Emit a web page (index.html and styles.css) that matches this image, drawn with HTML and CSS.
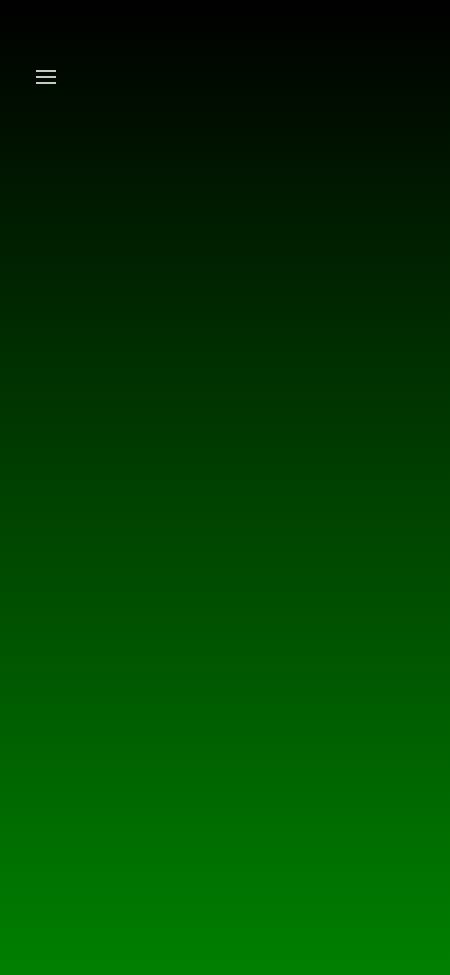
FILE: index.html
```html
<!DOCTYPE html>
<html lang="en">
  <head>
    <meta charset="UTF-8" />
    <meta name="viewport" content="width=device-width, initial-scale=1.0" />
    <title>Home</title>
    <link rel="stylesheet" href="styles.css">
  </head>
  <body>
    <div class="page">
      <header class="topbar">
        <button class="menu-btn" aria-label="Menu">
          <svg width="20" height="14" viewBox="0 0 20 14">
            <rect x="0" y="0" width="20" height="2" fill="#c8c8c8" />
            <rect x="0" y="6" width="20" height="2" fill="#c8c8c8" />
            <rect x="0" y="12" width="20" height="2" fill="#c8c8c8" />
          </svg>
        </button>
      </header>
    </div>
  </body>
</html>
```

FILE: styles.css
```css
html,
body {
  margin: 0;
  padding: 0;
  height: 100%;
}

body {
  font-family: Roboto, "Liberation Sans", sans-serif;
}

.page {
  min-height: 100%;
  background: linear-gradient(to bottom, #000000 0%, #008000 100%);
}

.topbar {
  display: flex;
  padding: 70px 0 0 36px;
}

.menu-btn {
  display: block;
  padding: 0;
  border: none;
  background: none;
  line-height: 0;
  cursor: pointer;
}
```
